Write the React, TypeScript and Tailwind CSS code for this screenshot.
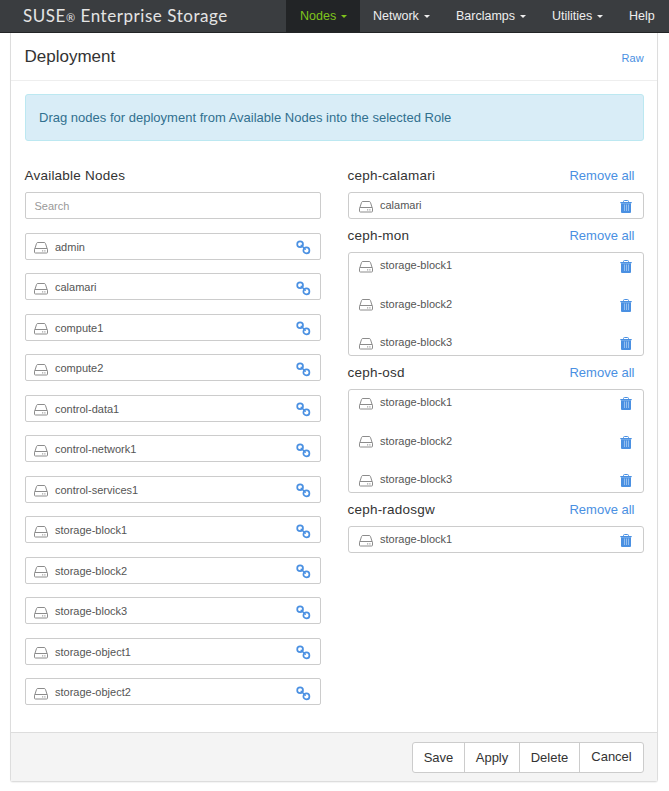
import React from 'react';

const availableNodes = [
  'admin',
  'calamari',
  'compute1',
  'compute2',
  'control-data1',
  'control-network1',
  'control-services1',
  'storage-block1',
  'storage-block2',
  'storage-block3',
  'storage-object1',
  'storage-object2',
];

const roles = [
  { name: 'ceph-calamari', nodes: ['calamari'] },
  { name: 'ceph-mon', nodes: ['storage-block1', 'storage-block2', 'storage-block3'] },
  { name: 'ceph-osd', nodes: ['storage-block1', 'storage-block2', 'storage-block3'] },
  { name: 'ceph-radosgw', nodes: ['storage-block1'] },
];

function DriveIcon() {
  return (
    <svg width="14" height="12" viewBox="0 0 14 12" fill="none" stroke="#8c8c8c" className="block shrink-0">
      <path d="M.9 6.6 2.5 1.5Q2.8.5 3.8.5H10.2Q11.2.5 11.5 1.5L13.1 6.6" />
      <path d="M.9 6.5H13.1Q13.5 6.5 13.5 7.2V10.2Q13.5 11 12.7 11H1.3Q.5 11 .5 10.2V7.2Q.5 6.5 .9 6.5Z" />
      <path d="M8.2 8.9h1M10.4 8.9h1" strokeWidth="1.1" />
    </svg>
  );
}

function LinkIcon() {
  return (
    <svg width="15" height="15" viewBox="0 0 15 15" fill="none" stroke="#4a90e2" strokeWidth="1.7" className="block shrink-0">
      <circle cx="4.1" cy="4.2" r="2.9" />
      <circle cx="10.4" cy="10.4" r="3" />
      <path d="M5.2 5.2 6.4 6.6M7.4 7.4 9.2 9.2" strokeWidth="1.5" strokeLinecap="round" />
    </svg>
  );
}

function TrashIcon() {
  return (
    <svg width="12" height="13" viewBox="0 0 12 13" fill="none" className="block shrink-0">
      <path d="M3.5 2.2V1.5Q3.5.5 4.5.5H7.5Q8.5.5 8.5 1.5V2.2" stroke="#4a90e2" strokeWidth="1" />
      <path d="M.3 2H11.7V3.2H.3Z" fill="#4a90e2" />
      <path d="M1 3.2H11V12Q11 13 10 13H2Q1 13 1 12Z" fill="#4a90e2" />
      <path d="M4.5 4.5V11M6.5 4.5V11M8.5 4.5V11" stroke="#a6caf2" strokeWidth="0.8" />
    </svg>
  );
}

function Caret() {
  return <span className="ml-[5px] mt-px border-x-[3px] border-t-[3px] border-x-transparent border-t-current" />;
}

function NavItem({ label, className, caret = true }: { label: string; className: string; caret?: boolean }) {
  return (
    <a className={`flex h-8 items-center whitespace-nowrap ${className}`}>
      {label}
      {caret && <Caret />}
    </a>
  );
}

export default function App() {
  return (
    <div className="h-[791px] w-[669px] overflow-hidden bg-white font-['Liberation_Sans',Arial,sans-serif] text-[13px] text-[#333]">
      <nav className="flex h-[33px] border-b border-[#222426] bg-[#3a3d40] text-[12.5px] text-[#eee]">
        <div className="w-[286px] whitespace-nowrap pl-[23px] font-['Lato',sans-serif] text-[17px] leading-[32px] tracking-[0.55px] text-[#e4e4e4]">
          SUSE<span className="text-[11px]">®</span> Enterprise Storage
        </div>
        <NavItem label="Nodes" className="w-[74px] bg-[#222426] pl-[14px] text-[#7fc31c]" />
        <NavItem label="Network" className="w-[83px] pl-[13px]" />
        <NavItem label="Barclamps" className="w-[96px] pl-[13px]" />
        <NavItem label="Utilities" className="w-[77px] pl-[13px]" />
        <NavItem label="Help" className="pl-[13px]" caret={false} />
      </nav>

      <main className="ml-[10px] flex h-[749px] w-[648px] flex-col rounded-b-[3px] border border-t-0 border-[#ddd] shadow-[0_1px_1px_rgba(0,0,0,0.05)]">
        <header className="flex h-[48px] items-center justify-between border-b border-[#eee] pr-[13px] pl-[13.5px]">
          <h1 className="text-[17px]">Deployment</h1>
          <a className="mt-[3px] text-[11px] tracking-[0.2px] text-[#4a90e2]">Raw</a>
        </header>

        <div className="mr-[13px] ml-[14px] mt-[13px] flex h-[47px] items-center rounded-[3px] border border-[#bce8f1] bg-[#d9edf7] pl-[13px] tracking-[0.01px] whitespace-nowrap text-[#31708f]">
          Drag nodes for deployment from Available Nodes into the selected Role
        </div>

        <div className="flex min-h-0 flex-1 gap-[27px] px-[14px] pt-[24px]">
          <section className="w-[296px] shrink-0">
            <h2 className="-ml-[0.5px] h-[27px] text-[13.5px] leading-[22px] tracking-[0.22px]">Available Nodes</h2>
            <div className="mb-[13.75px] flex h-[27px] items-center rounded-[2px] border border-[#ccc] pt-px pl-[8.5px] text-[11px] text-[#999]">
              Search
            </div>
            {availableNodes.map((node) => (
              <div key={node} className="h-[40.5px]">
                <div className="flex h-[27px] items-center rounded-[2px] border border-[#ccc] pr-[9px] pl-[8px] text-[11px] text-[#555]">
                  <div className="mt-[4px]"><DriveIcon /></div>
                  <span className="ml-[7px] flex-1 pt-[1px]">{node}</span>
                  <div className="mt-[3px]"><LinkIcon /></div>
                </div>
              </div>
            ))}
          </section>

          <section className="w-[296px] shrink-0">
            {roles.map((role) => (
              <div key={role.name} className="mb-[6px]">
                <div className="flex h-[27px] justify-between pr-[9.5px] leading-[22px]">
                  <h2 className="-ml-[0.5px] text-[13.5px] tracking-[0.22px]">{role.name}</h2>
                  <a className="text-[13px] text-[#4a90e2]">Remove all</a>
                </div>
                <div className="flex flex-col gap-[13.5px] rounded-[3px] border border-[#ccc] pr-[11px] pl-[10px] text-[11px] text-[#555]">
                  {role.nodes.map((node) => (
                    <div key={node} className="flex h-[25px] items-center">
                      <div className="mt-[2px]"><DriveIcon /></div>
                      <span className="ml-[7px] flex-1">{node}</span>
                      <div className="mt-[2px]"><TrashIcon /></div>
                    </div>
                  ))}
                </div>
              </div>
            ))}
          </section>
        </div>

        <footer className="flex h-[49px] justify-end border-t border-[#ddd] bg-[#f4f4f4] pt-[9px] pr-[13px]">
          <div className="flex h-[31px] w-[232px] rounded-[3px] border border-[#ccc] bg-white text-[13px] leading-[29px]">
            <button className="w-[52px] border-r border-[#ccc]">Save</button>
            <button className="w-[55px] border-r border-[#ccc]">Apply</button>
            <button className="w-[60px] border-r border-[#ccc]">Delete</button>
            <button className="flex h-[27px] flex-1 items-center justify-center">Cancel</button>
          </div>
        </footer>
      </main>
    </div>
  );
}
